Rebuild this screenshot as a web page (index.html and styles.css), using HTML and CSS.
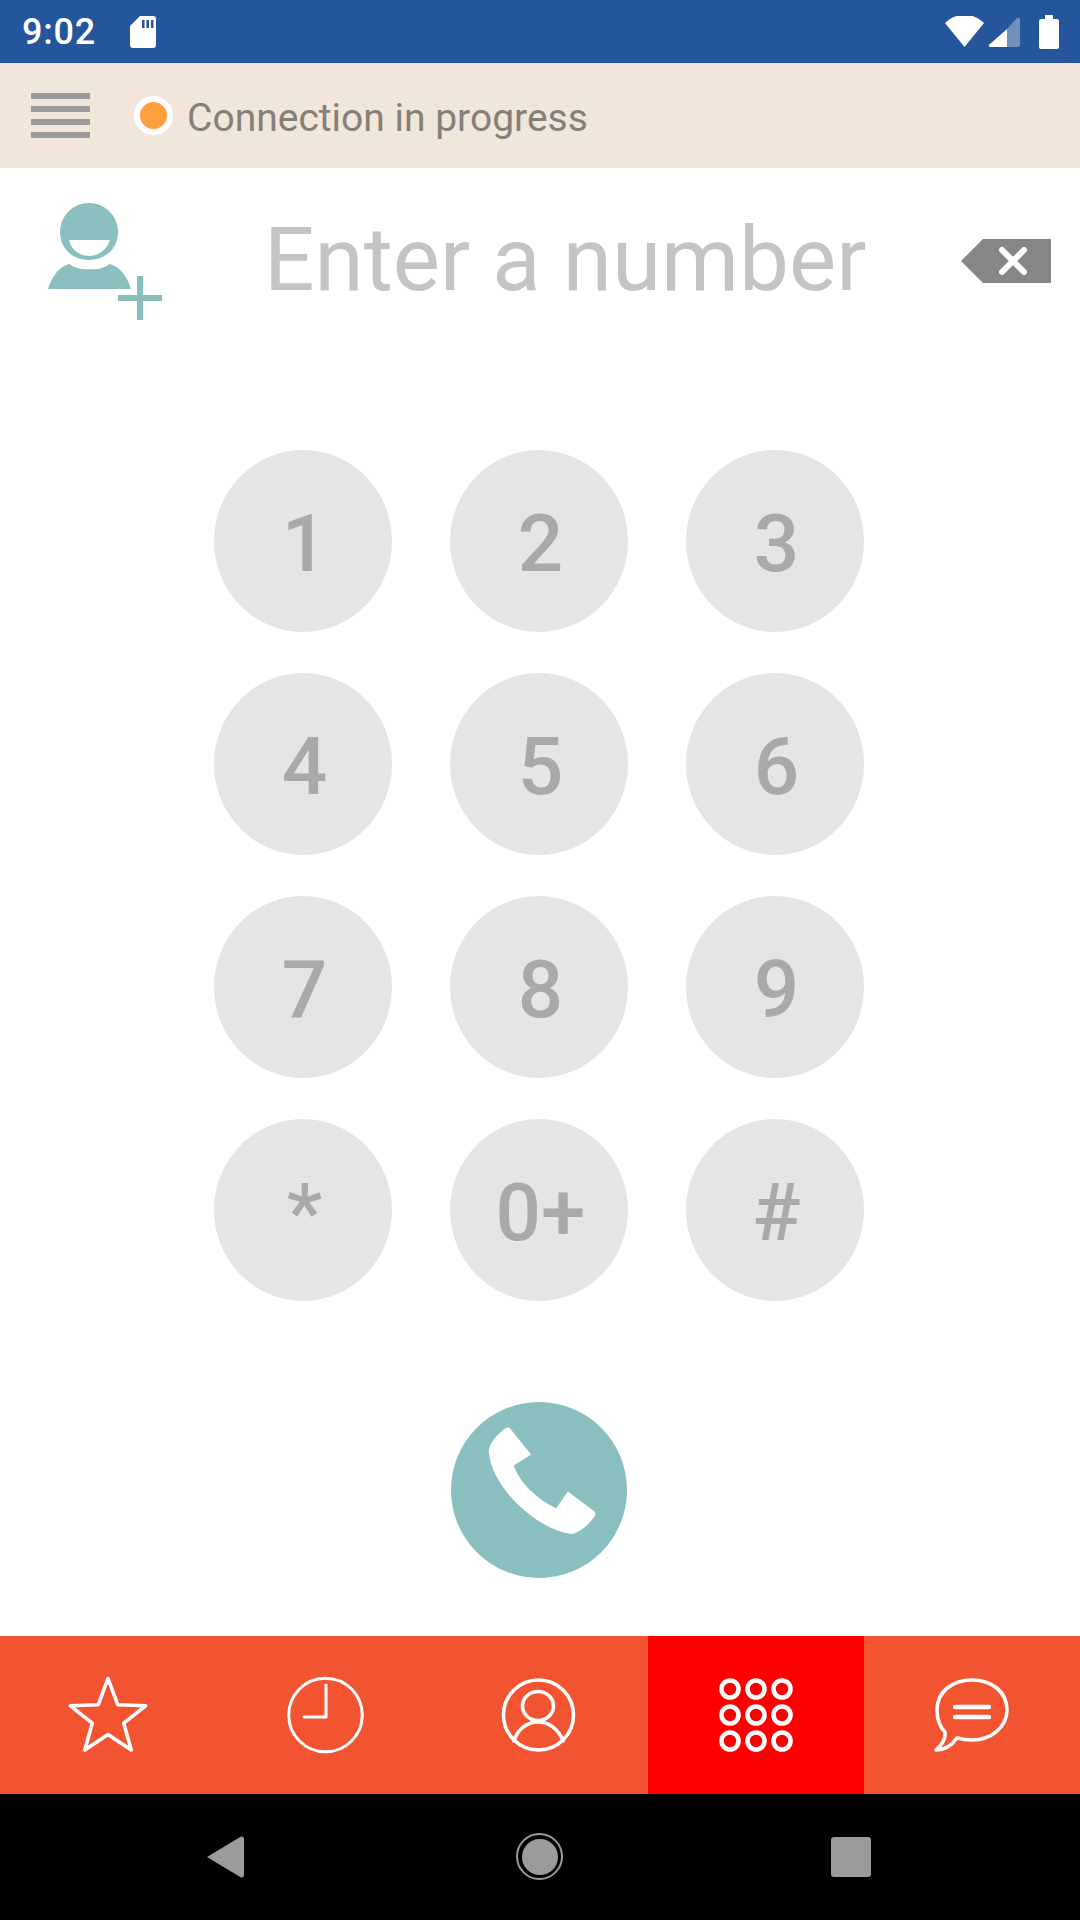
FILE: index.html
```html
<!DOCTYPE html>
<html lang="en">
<head>
<meta charset="utf-8">
<title>Dialer</title>
<link rel="stylesheet" href="styles.css">
</head>
<body>
<div class="screen">
  <div class="status">
    <span class="time">9:02</span>
    <svg class="sd" viewBox="0 0 26 32"><path class="w" d="M10 0H23a3 3 0 0 1 3 3V29a3 3 0 0 1-3 3H3a3 3 0 0 1-3-3V10z"/><path class="b" d="M12 4h2.500v8H12zM16.500 4H19v8h-2.500zM21 4h2.500v8H21z"/></svg>
    <div class="status-right">
      <svg class="wifi" viewBox="0 0 39 31"><path class="w" d="M19.500 31 0 7C11-4 28-4 39 7z"/></svg>
      <svg class="signal" viewBox="0 0 31 31"><path class="w half" d="M18 13 28 2a2 2 0 0 1 3 1V29a2 2 0 0 1-2 2H18z"/><path class="w" d="M18 13V31H2a1.500 1.500 0 0 1-1-3z"/></svg>
      <svg class="battery" viewBox="0 0 20 34"><path class="w" d="M6 0h8v4h4a2 2 0 0 1 2 2V32a2 2 0 0 1-2 2H2a2 2 0 0 1-2-2V6a2 2 0 0 1 2-2h4z"/></svg>
    </div>
  </div>

  <header class="topbar">
    <div class="menu"><i></i><i></i><i></i><i></i></div>
    <span class="dot"></span>
    <span class="conn">Connection in progress</span>
  </header>

  <main class="main">
    <div class="number-row">
      <svg class="add" viewBox="0 0 114 117">
        <path class="teal" d="M41 0C57 0 70 13 70 29 70 46 57 57 41 57 25 57 12 46 12 29 12 13 25 0 41 0z"/>
        <path class="wf" d="M21 37H62C59 47 50 53 41 53 32 53 23 47 21 37z"/>
        <path class="teal" d="M21 61C27 65 34 67 41 66 50 67 56 65 62 61 72 64 79 73 83 86H0C4 73 11 64 21 61z"/>
        <path class="teal" d="M89 73h6v19h19v6H95v19h-6V98H70v-6h19z"/>
      </svg>
      <div class="placeholder">Enter a number</div>
      <svg class="back" viewBox="0 0 90 44"><path class="grey" d="M22 0H90V44H22L0 22z"/><path class="x" d="M41 11 63 33M63 11 41 33"/></svg>
    </div>

    <div class="keys">
      <div class="key">1</div><div class="key">2</div><div class="key">3</div>
      <div class="key">4</div><div class="key">5</div><div class="key">6</div>
      <div class="key">7</div><div class="key">8</div><div class="key">9</div>
      <div class="key">*</div><div class="key">0+</div><div class="key">#</div>
    </div>

    <div class="call">
      <svg viewBox="0 0 527 527"><path class="wf" d="M175 77 240 157 188 190C205 240 255 290 315 318L350 268 430 328Q435 335 430 342C415 365 390 388 365 395 280 392 125 272 113 150 112 125 145 90 165 78 169 76 172 76 175 77z"/></svg>
    </div>
  </main>

  <nav class="tabs">
    <div class="tab">
      <svg viewBox="0 0 80 80"><path class="line thick" d="M40 3.500 49.700 29.700 77.600 30.800 55.700 48.100 63.200 75 40 59.500 16.800 75 24.300 48.100 2.400 30.800 30.300 29.700z"/></svg>
    </div>
    <div class="tab">
      <svg viewBox="0 0 80 80"><circle class="line" cx="41.500" cy="40" r="36.800"/><path class="line" d="M42 10V42H20"/></svg>
    </div>
    <div class="tab">
      <svg viewBox="0 0 80 80"><circle class="line thick" cx="38.500" cy="40" r="35"/><ellipse class="line thick" cx="38" cy="31" rx="15.500" ry="14.500"/><path class="line thick" d="M14 66C18 53 28 47 38 47S58 53 63 66"/></svg>
    </div>
    <div class="tab active">
      <svg viewBox="0 0 80 80"><g class="ring"><circle cx="14" cy="14" r="8.500"/><circle cx="40" cy="14" r="8.500"/><circle cx="66" cy="14" r="8.500"/><circle cx="14" cy="40" r="8.500"/><circle cx="40" cy="40" r="8.500"/><circle cx="66" cy="40" r="8.500"/><circle cx="14" cy="66" r="8.500"/><circle cx="40" cy="66" r="8.500"/><circle cx="66" cy="66" r="8.500"/></g></svg>
    </div>
    <div class="tab">
      <svg viewBox="0 0 80 80"><path class="line thick" d="M40 5C60 5 75 17 75 35 75 52 59 65 40 65 34 65 29 64 25 63 20 70 13 75 4 75 9 71 14 64 13 57 7 51 5 43 5 35 5 17 20 5 40 5z"/><path class="bars" d="M23 32H57M23 42H57"/></svg>
    </div>
  </nav>

  <footer class="nav">
    <svg class="nav-back" viewBox="0 0 37 42"><path class="grey2" d="M0 21 34 0.500Q37 0 37 3V39Q37 42 34 41.500z"/></svg>
    <div class="nav-home"><span></span></div>
    <div class="nav-recent"></div>
  </footer>
</div>
</body>
</html>
```
FILE: styles.css
```css
* { box-sizing: border-box; }
html, body { margin: 0; padding: 0; background: #fff; }
body { font-family: Roboto, "Liberation Sans", sans-serif; }
svg { display: block; flex: none; }

.screen { width: 1080px; height: 1920px; display: flex; flex-direction: column; overflow: hidden; }

.w { fill: #fff; }
.b { fill: #25559b; }
.half { opacity: .35; }
.wf { fill: #fff; }
.teal { fill: #8abfbf; }
.grey { fill: #868686; }
.grey2 { fill: #9b9b9b; }
.x { fill: none; stroke: #fff; stroke-width: 6; stroke-linecap: round; }
.line { fill: none; stroke: #fff; stroke-width: 3; stroke-linejoin: round; stroke-linecap: round; }
.line.thick { stroke-width: 3.600; }
.bars { fill: none; stroke: #fff; stroke-width: 4.500; stroke-linecap: round; }
.ring circle { fill: none; stroke: #fff; stroke-width: 4.600; }

/* status bar */
.status { height: 63px; background: #25559b; display: flex; align-items: center; padding: 0 21px 0 22px; color: #fff; }
.time { font-size: 36px; font-weight: 500; letter-spacing: .8px; line-height: 1; width: 108px; }
.sd { width: 26px; height: 32px; margin-bottom: -1px; }
.status-right { margin-left: auto; display: flex; align-items: center; }
.wifi { width: 39px; height: 31px; margin-right: 5px; }
.signal { width: 31px; height: 31px; margin-right: 19px; }
.battery { width: 20px; height: 34px; }

/* header */
.topbar { height: 105px; background: #f1e6da; display: flex; align-items: center; padding-left: 31px; }
.menu { width: 59px; display: flex; flex-direction: column; gap: 7px; }
.menu i { display: block; height: 6px; background: #9a9a9a; }
.dot { width: 39px; height: 39px; margin-left: 44px; border-radius: 50%; background: #ffa040; border: 6px solid #fff; }
.conn { margin-left: 14px; font-size: 39px; color: #857f7a; line-height: 1; padding-top: 6px; }

/* main */
.main { flex: 1; display: flex; flex-direction: column; background: #fff; }
.number-row { height: 186px; display: flex; align-items: center; padding: 0 29px 0 48px; }
.add { width: 114px; height: 117px; }
.placeholder { margin: 0 0 4px 102px; font-size: 89px; color: #c4c4c4; line-height: 1; white-space: nowrap; }
.back { width: 90px; height: 44px; margin-left: auto; }

.keys { margin-top: 96px; display: grid; grid-template-columns: repeat(3, 178px); grid-auto-rows: 182px; gap: 41px 58px; justify-content: center; padding-right: 2px; }
.key { background: #e5e5e5; border-radius: 50%; display: flex; align-items: center; justify-content: center; font-size: 80px; font-weight: 500; color: #a9a9a9; line-height: 1; padding: 6px 0 0 3px; }

.call { width: 176px; height: 176px; margin: 101px 0 0 451px; border-radius: 50%; background: #8abfbf; }
.call svg { width: 176px; height: 176px; }

/* tabs */
.tabs { height: 158px; display: flex; background: #f25432; }
.tab { flex: 1; display: flex; align-items: center; justify-content: center; }
.tab svg { width: 80px; height: 80px; }
.tab.active { background: #ff0000; }

/* android nav */
.nav { height: 126px; background: #000; position: relative; }
.nav-back { position: absolute; left: 207px; top: 42px; width: 37px; height: 42px; }
.nav-home { position: absolute; left: 516px; top: 39px; width: 47px; height: 47px; border-radius: 50%; border: 2.500px solid #9b9b9b; display: flex; align-items: center; justify-content: center; }
.nav-home span { display: block; width: 36px; height: 36px; border-radius: 50%; background: #9b9b9b; }
.nav-recent { position: absolute; left: 831px; top: 43px; width: 40px; height: 40px; border-radius: 3px; background: #9b9b9b; }
```
